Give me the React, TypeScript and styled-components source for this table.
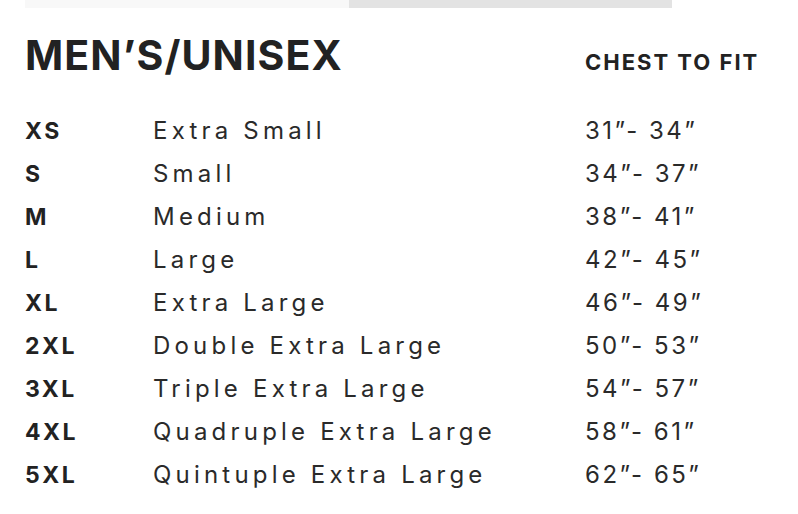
import React from 'react';
import styled, {createGlobalStyle} from 'styled-components';

const GlobalStyle = createGlobalStyle`
  body {
    margin: 0;
    background: #fff;
    color: #222;
    font-family: Inter, "Liberation Sans", sans-serif;
  }
`;

const sizes = [
  {code: 'XS', name: 'Extra Small', chest: '31”- 34”'},
  {code: 'S', name: 'Small', chest: '34”- 37”'},
  {code: 'M', name: 'Medium', chest: '38”- 41”'},
  {code: 'L', name: 'Large', chest: '42”- 45”'},
  {code: 'XL', name: 'Extra Large', chest: '46”- 49”'},
  {code: '2XL', name: 'Double Extra Large', chest: '50”- 53”'},
  {code: '3XL', name: 'Triple Extra Large', chest: '54”- 57”'},
  {code: '4XL', name: 'Quadruple Extra Large', chest: '58”- 61”'},
  {code: '5XL', name: 'Quintuple Extra Large', chest: '62”- 65”'},
];

export default function App() {
  return (
    <>
      <GlobalStyle />
      <Page>
        <Tabs>
          <Tab />
          <Tab active />
        </Tabs>

        <Header>
          <Title>MEN’S/UNISEX</Title>
          <ColumnLabel>CHEST TO FIT</ColumnLabel>
        </Header>

        <Table>
          {sizes.map((size) => (
            <Row key={size.code}>
              <Code>{size.code}</Code>
              <Name>{size.name}</Name>
              <Chest>{size.chest}</Chest>
            </Row>
          ))}
        </Table>
      </Page>
    </>
  );
}

const Page = styled.div`
  width: 798px;
  height: 514px;
  padding: 0 25px;
  box-sizing: border-box;
  overflow: hidden;
`;

const Tabs = styled.div`
  width: 647px;
  height: 8px;
  display: flex;
`;

const Tab = styled.div<{active?: boolean}>`
  flex: 1;
  background: ${(p) => (p.active ? '#e3e3e3' : '#f8f8f8')};
`;

const Header = styled.div`
  margin-top: 22px;
  display: grid;
  grid-template-columns: 560px auto;
  align-items: baseline;
`;

const Title = styled.h1`
  margin: 0;
  font-size: 41px;
  line-height: 50px;
  font-weight: 700;
  letter-spacing: 1.1px;
`;

const ColumnLabel = styled.div`
  font-size: 22px;
  font-weight: 700;
  letter-spacing: 2px;
`;

const Table = styled.div`
  margin-top: 29px;
  display: flex;
  flex-direction: column;
`;

const Row = styled.div`
  display: grid;
  grid-template-columns: 128px 432px auto;
  align-items: baseline;
  height: 43px;
  line-height: 43px;
`;

const Code = styled.div`
  font-size: 23px;
  font-weight: 700;
  letter-spacing: 2.5px;
`;

const Name = styled.div`
  font-size: 24px;
  font-weight: 400;
  letter-spacing: 4.2px;
  color: #2a2a2a;
`;

const Chest = styled(Name)`
  letter-spacing: 2.5px;
`;
